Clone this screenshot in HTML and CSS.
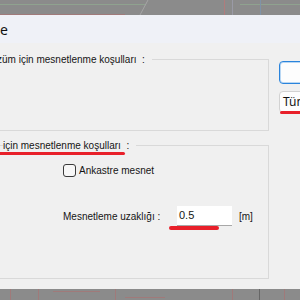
FILE: index.html
```html
<!DOCTYPE html>
<html lang="tr">
<head>
<meta charset="utf-8">
<link rel="stylesheet" href="styles.css">
</head>
<body>
<div class="backdrop-top">
  <svg width="300" height="15" viewBox="0 0 300 15">
    <line x1="0" y1="4.5" x2="145" y2="4.5" stroke="#8fa28f" stroke-width="1"/>
    <line x1="240" y1="4.5" x2="300" y2="4.5" stroke="#8fa28f" stroke-width="1"/>
    <line x1="140" y1="15" x2="148" y2="0" stroke="#a5a5a5" stroke-width="1"/>
    <line x1="224.5" y1="0" x2="224.5" y2="15" stroke="#b07c7c" stroke-width="1"/>
    <line x1="232.5" y1="0" x2="232.5" y2="15" stroke="#9a9aa6" stroke-width="1"/>
    <line x1="260.5" y1="0" x2="260.5" y2="15" stroke="#7f93a8" stroke-width="1"/>
    <line x1="0" y1="14.5" x2="125" y2="14.5" stroke="#a07a7a" stroke-width="1"/>
  </svg>
</div>
<div class="window">
  <div class="titlebar"><span class="title">e</span></div>
  <div class="client">
    <div class="groups">
      <div class="group group-top">
        <span class="group-label label-one">züm için mesnetlenme koşulları&nbsp;&nbsp;:</span>
      </div>
      <div class="group group-bottom">
        <span class="group-label label-two">için mesnetlenme koşulları&nbsp;&nbsp;:</span>
        <label class="check-row">
          <span class="checkbox"></span>
          <span>Ankastre mesnet</span>
        </label>
        <div class="field-row">
          <span class="field-label">Mesnetleme uzaklığı :</span>
          <span class="textbox">0.5</span>
          <span class="unit">[m]</span>
        </div>
      </div>
    </div>
    <div class="buttons">
      <div class="btn btn-focus"></div>
      <div class="btn btn-plain">Tüm</div>
    </div>
  </div>
</div>
<div class="backdrop-bottom">
  <svg width="300" height="11" viewBox="0 0 300 11">
    <line x1="10.5" y1="0" x2="10.5" y2="11" stroke="#a07a7a"/>
    <line x1="38.5" y1="0" x2="38.5" y2="11" stroke="#a07a7a"/>
    <line x1="53" y1="2.5" x2="100" y2="2.5" stroke="#a07a7a"/>
    <line x1="115.5" y1="0" x2="115.5" y2="11" stroke="#a07a7a"/>
    <line x1="125" y1="8.5" x2="165" y2="8.5" stroke="#a07a7a"/>
    <line x1="232.5" y1="0" x2="232.5" y2="11" stroke="#a07a7a"/>
    <line x1="259.5" y1="0" x2="259.5" y2="11" stroke="#666"/>
    <line x1="284.5" y1="0" x2="284.5" y2="11" stroke="#a07a7a"/>
  </svg>
</div>
<span class="mark mark-label"></span>
<span class="mark mark-input"></span>
<span class="mark mark-button"></span>
</body>
</html>
```

FILE: styles.css
```css
html, body {
  margin: 0;
  padding: 0;
}
body {
  width: 300px;
  height: 300px;
  overflow: hidden;
  background: #8b8b8b;
  position: relative;
  font-family: "Liberation Sans", Arial, sans-serif;
  font-size: 10px;
  color: #151515;
}
.backdrop-top {
  height: 15px;
}
.backdrop-top svg, .backdrop-bottom svg {
  display: block;
}
.backdrop-bottom {
  height: 11px;
}
.window {
  margin-left: -40px;
  width: 380px;
  background: #f0f0f0;
}
.titlebar {
  height: 28px;
  background: #eff1f7;
  padding-left: 40px;
  display: flex;
  align-items: center;
  font-family: "Noto Sans", "Open Sans", sans-serif;
  font-size: 14px;
  color: #111;
}
.title {
  margin-top: 1px;
}
.client {
  height: 246px;
  display: flex;
  box-sizing: border-box;
}
.groups {
  width: 309px;
  flex: none;
  display: flex;
  flex-direction: column;
}
.group {
  position: relative;
  border: 1px solid #d9d9d9;
  box-sizing: border-box;
}
.group-top {
  margin-top: 16px;
  height: 72px;
}
.group-bottom {
  margin-top: 14px;
  height: 134px;
  padding-left: 102px;
  padding-top: 18px;
}
.group-label {
  position: absolute;
  top: -7px;
  line-height: 13px;
  background: #f0f0f0;
  padding: 0 7px 0 0;
  white-space: nowrap;
}
.label-one {
  left: 36px;
}
.label-two {
  left: 42px;
}
.check-row {
  display: flex;
  align-items: center;
  gap: 3px;
  height: 13px;
  line-height: 13px;
}
.checkbox {
  width: 11px;
  height: 11px;
  border: 1px solid #3a3a3a;
  border-radius: 3px;
  background: #f7f7f7;
}
.field-row {
  margin-top: 29px;
  display: flex;
  align-items: center;
  height: 20px;
}
.field-label {
  width: 114px;
  white-space: nowrap;
}
.textbox {
  width: 55px;
  height: 20px;
  box-sizing: border-box;
  background: #fff;
  border-bottom: 1px solid #a8a8a8;
  padding-left: 2px;
  line-height: 19px;
  font-size: 11px;
}
.unit {
  margin-left: 7px;
}
.buttons {
  margin-left: 10px;
  padding-top: 18px;
  display: flex;
  flex-direction: column;
  gap: 7px;
}
.btn {
  width: 60px;
  box-sizing: border-box;
  border-radius: 4px;
  background: #fdfdfd;
  font-family: "Noto Sans", "Open Sans", sans-serif;
  font-size: 12px;
  color: #111;
}
.btn-focus {
  height: 23px;
  border: 1px solid #2a84dc;
  box-shadow: inset 0 0 0 1px #b9d7f3;
}
.btn-plain {
  height: 22px;
  border: 1px solid #d2d2d2;
  padding-left: 3px;
  line-height: 19px;
}
.mark {
  position: absolute;
  background: #e8202a;
  border-radius: 2px;
}
.mark-label {
  left: -2px;
  top: 152px;
  width: 127px;
  height: 3px;
}
.mark-input {
  left: 169px;
  top: 226px;
  width: 50px;
  height: 4px;
}
.mark-button {
  left: 280px;
  top: 111px;
  width: 24px;
  height: 3px;
}
```
